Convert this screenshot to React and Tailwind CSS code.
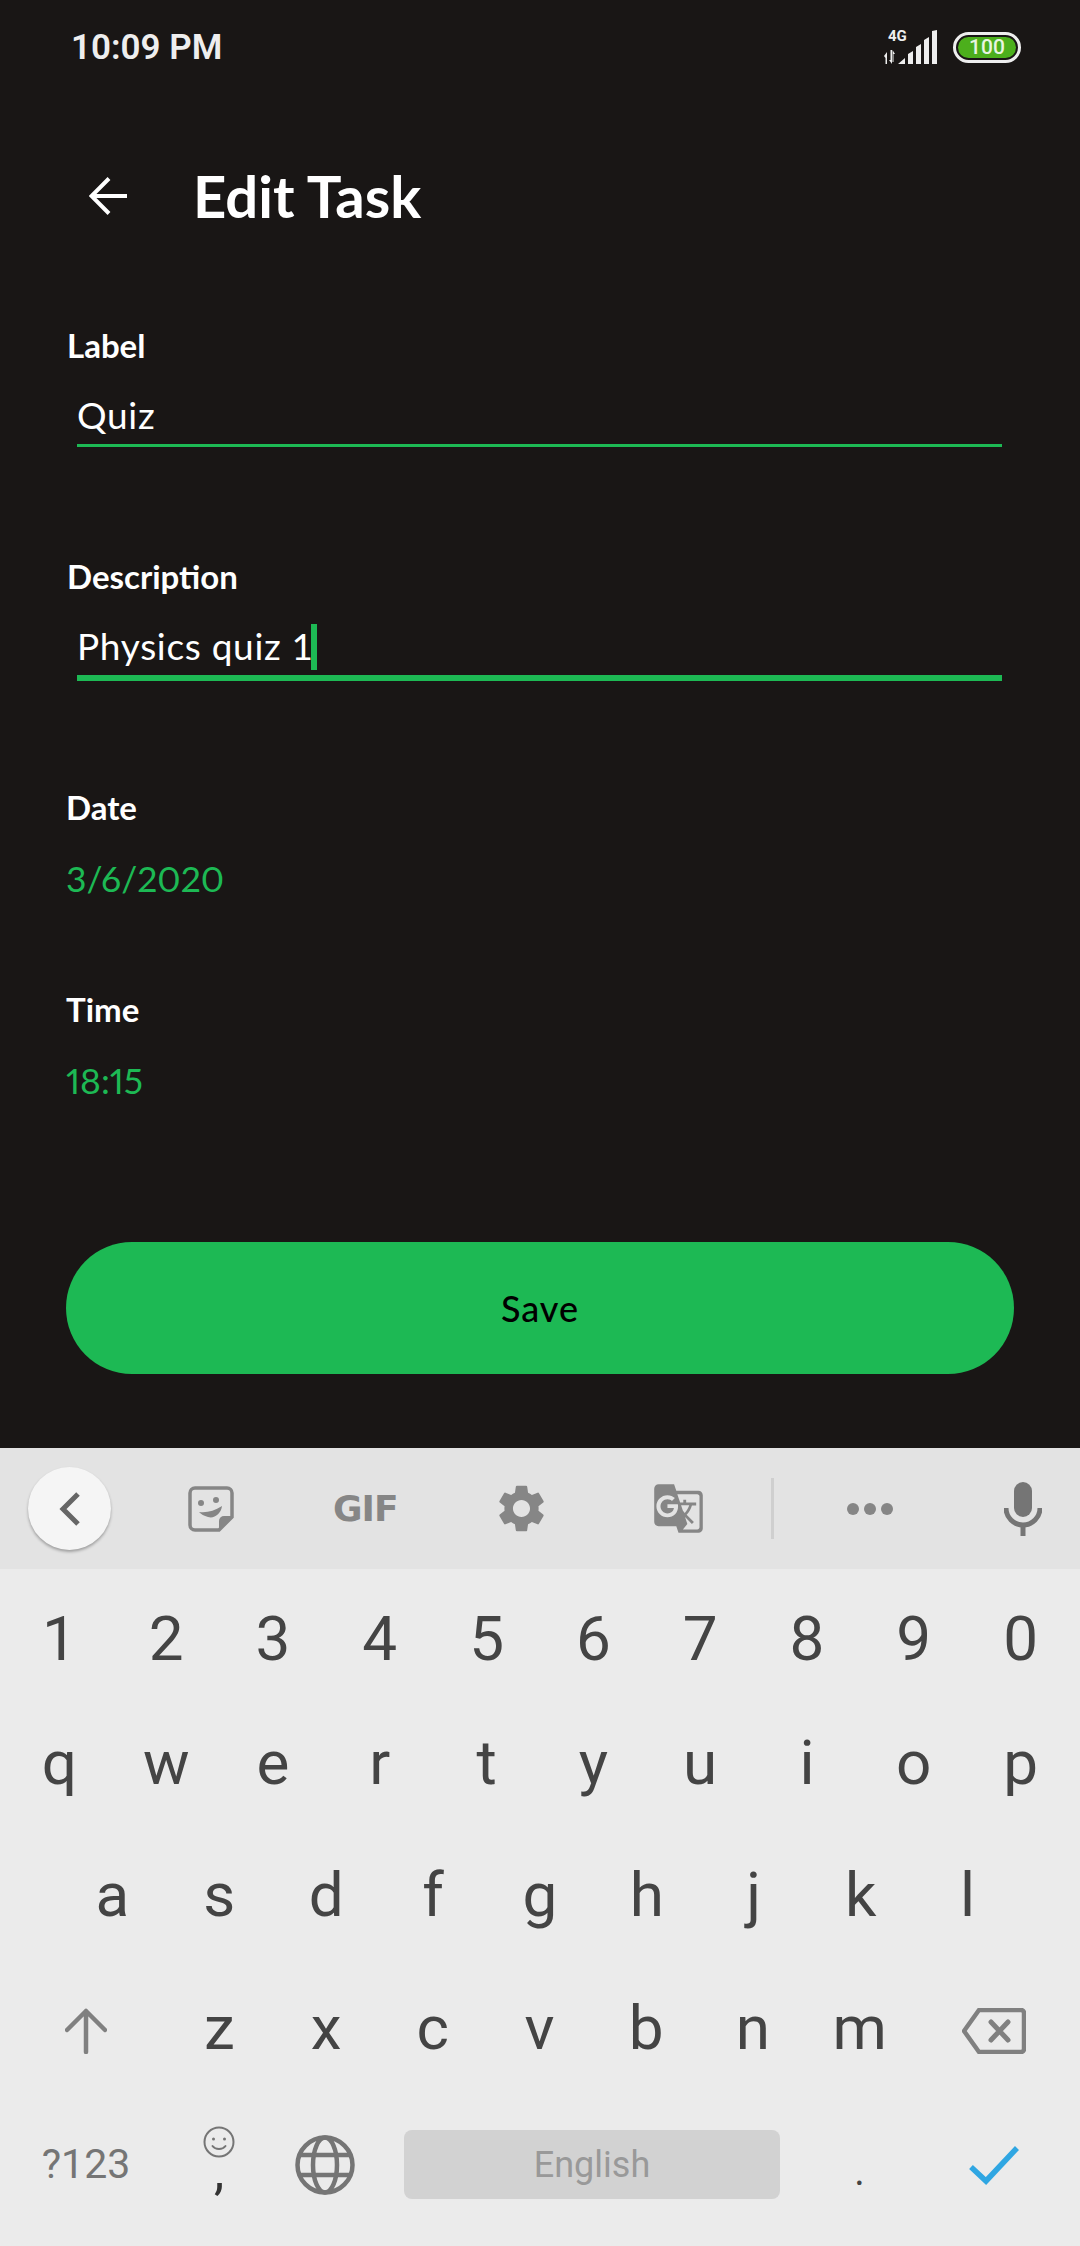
import React from 'react';
import { MdGTranslate } from 'react-icons/md';

const Field = ({ label, value, focused }) => (
  <div className="flex flex-col">
    <div className="pl-[67px] text-[33px] leading-[40px] font-bold text-white font-['Lato',sans-serif]">{label}</div>
    <div className="ml-[77px] mr-[78px] mt-[18px] flex items-end h-[61px] text-[37px] leading-[50px] tracking-[0.7px] text-white font-['Lato',sans-serif]">
      <span className="mb-[4px]">{value}</span>
      {focused && <span className="w-[6px] h-[46px] -ml-[3px] bg-[#1db954] mb-[5px]"></span>}
    </div>
    <div className={focused ? 'ml-[77px] mr-[78px] h-[6px] bg-[#1db954]' : 'ml-[77px] mr-[78px] h-[3px] bg-[#1db954]'}></div>
  </div>
);

const Picker = ({ label, value }) => (
  <div className="pl-[66px] flex flex-col font-['Lato',sans-serif]">
    <div className="text-[33px] leading-[40px] font-bold text-white">{label}</div>
    <div className="mt-[32px] text-[35.500px] leading-[40px] proportional-nums text-[#1db954]">{value}</div>
  </div>
);

const Keys = ({ letters, className }) => (
  <div className={className}>
    {letters.map((k) => (
      <div key={k} className="flex-1 text-center">{k}</div>
    ))}
  </div>
);

export default function App() {
  return (
    <div className="w-[1080px] h-[2246px] flex flex-col overflow-hidden bg-[#191615]">
      {/* status bar */}
      <div className="h-[94px] shrink-0 flex items-center justify-between pl-[71px] pr-[59px]">
        <span className="mt-[3px] text-[35px] font-semibold text-[#eeeeee] font-['Roboto',sans-serif]">10:09 PM</span>
        <div className="flex items-center gap-[14px]">
          <div className="relative w-[56px] h-[34px]">
            <span className="absolute left-[5px] top-[-3px] text-[15px] leading-[18px] font-bold text-[#eeeeee] font-['Roboto',sans-serif]">4G</span>
            <svg width="56" height="34" viewBox="0 0 56 34" fill="#eeeeee">
              <path d="M1 26l3-4v12h-1.500v-6zM9 34l-3-4h1.500v-10h1.500zM9.500 20l2.500 4h-1.500v8h-1z" />
              <path d="M15 34l7-6v6zM25 34v-10l5-3v13zM33 34v-17l5-3v20zM41 34v-24l5-3v27zM49 34v-33l5-1v34z" />
            </svg>
          </div>
          <div className="w-[68px] h-[31px] rounded-full border-[3px] border-[#eeeeee] p-[2px]">
            <div className="h-full rounded-full bg-[#4caf1c] flex items-center justify-center text-[#e8f5e0] text-[21px] leading-none font-medium font-['Roboto',sans-serif]">100</div>
          </div>
        </div>
      </div>

      {/* header */}
      <div className="h-[98px] shrink-0 mt-[53px] flex items-center pl-[89px]">
        <svg width="38" height="38" viewBox="0 0 38 38" fill="none" stroke="#ffffff" strokeWidth="4">
          <path d="M38 19H3M20 1.500 2.500 19 20 36.500" />
        </svg>
        <span className="ml-[66px] text-[58px] leading-[60px] font-bold text-white font-['Lato',sans-serif]">Edit Task</span>
      </div>

      <div className="mt-[80px]">
        <Field label="Label" value="Quiz" />
      </div>
      <div className="mt-[109px]">
        <Field label="Description" value="Physics quiz 1" focused />
      </div>

      <div className="mt-[106px]"><Picker label="Date" value="3/6/2020" /></div>
      <div className="mt-[90px]"><Picker label="Time" value="18:15" /></div>

      <div className="mx-[66px] mt-[141px] h-[132px] rounded-full bg-[#1db954] flex items-center justify-center text-[36px] tracking-[1px] text-black font-medium font-['Lato',sans-serif]">Save</div>

      <div className="flex-1"></div>

      {/* keyboard toolbar */}
      <div className="h-[121px] shrink-0 bg-[#e3e3e3] flex items-center relative">
        <div className="ml-[28px] w-[83px] h-[83px] rounded-full bg-[#f5f5f5] shadow-[0_2px_3px_rgba(0,0,0,0.3)] flex items-center justify-center">
          <svg width="22" height="34" viewBox="0 0 22 34" fill="none" stroke="#666666" strokeWidth="5">
            <path d="M19 2 4 17l15 15" />
          </svg>
        </div>
        <svg className="ml-[77px]" width="46" height="46" viewBox="0 0 46 46" fill="none">
          <path d="M7 2h32a5 5 0 0 1 5 5v24L31 44H7a5 5 0 0 1-5-5V7a5 5 0 0 1 5-5z" stroke="#868686" strokeWidth="3.500" />
          <path d="M44 30 31 44V35a5 5 0 0 1 5-5z" fill="#868686" />
          <circle cx="13" cy="17" r="3" fill="#868686" />
          <circle cx="28" cy="14" r="3" fill="#868686" />
          <path d="M11 26c8 1 15-1 23-6-1 8-8 13-14 11-4-1-7-3-9-5z" fill="#868686" />
        </svg>
        <span className="ml-[99px] w-[64px] text-[36px] leading-none font-bold text-[#868686] font-['DejaVu_Sans',sans-serif] tracking-[-1px]">GIF</span>
        <svg className="ml-[96px]" width="57" height="57" viewBox="0 0 24 24" fill="#868686">
          <path d="M19.14 12.94c.04-.3.06-.61.06-.94 0-.32-.02-.64-.07-.94l2.03-1.58a.49.49 0 0 0 .12-.61l-1.92-3.32a.488.488 0 0 0-.59-.22l-2.39.96c-.5-.38-1.03-.7-1.62-.94l-.36-2.54a.484.484 0 0 0-.48-.41h-3.84c-.24 0-.43.17-.47.41l-.36 2.54c-.59.24-1.13.57-1.62.94l-2.39-.96c-.22-.08-.47 0-.59.22L2.74 8.87c-.12.21-.08.47.12.61l2.03 1.58c-.05.3-.09.63-.09.94s.02.64.07.94l-2.03 1.58a.49.49 0 0 0-.12.61l1.92 3.32c.12.22.37.29.59.22l2.39-.96c.5.38 1.03.7 1.62.94l.36 2.54c.05.24.24.41.48.41h3.84c.24 0 .44-.17.47-.41l.36-2.54c.59-.24 1.13-.56 1.62-.94l2.39.96c.22.08.47 0 .59-.22l1.92-3.32c.12-.22.07-.47-.12-.61l-2.01-1.58zM12 15.6c-1.98 0-3.6-1.62-3.6-3.6s1.62-3.6 3.6-3.6 3.6 1.62 3.6 3.6-1.62 3.6-3.6 3.6z" />
        </svg>
        <MdGTranslate className="ml-[102px]" size={53} color="#868686" />
        <div className="ml-[66px] w-[3px] h-[61px] bg-[#cfcfcf]"></div>
        <div className="ml-[73px] flex gap-[5px]">
          <div className="w-[12px] h-[12px] rounded-full bg-[#868686]"></div>
          <div className="w-[12px] h-[12px] rounded-full bg-[#868686]"></div>
          <div className="w-[12px] h-[12px] rounded-full bg-[#868686]"></div>
        </div>
        <svg className="ml-[111px]" width="38" height="54" viewBox="0 0 38 54" fill="none">
          <rect x="10" y="0" width="18" height="35" rx="9" fill="#757575" />
          <path d="M2 26a17 17 0 0 0 34 0" stroke="#757575" strokeWidth="5" />
          <path d="M19 42v12" stroke="#757575" strokeWidth="5" />
        </svg>
      </div>

      {/* keyboard */}
      <div className="h-[677px] shrink-0 bg-[#ebebeb] pt-[9px] text-[#444444] text-[62px] font-['Roboto',sans-serif] flex flex-col">
        <Keys className="h-[120px] px-[6px] flex items-center" letters={['1', '2', '3', '4', '5', '6', '7', '8', '9', '0']} />
        <Keys className="h-[128px] px-[6px] flex items-center" letters={['q', 'w', 'e', 'r', 't', 'y', 'u', 'i', 'o', 'p']} />
        <Keys className="h-[137px] px-[59px] flex items-center" letters={['a', 's', 'd', 'f', 'g', 'h', 'j', 'k', 'l']} />
        <div className="h-[128px] px-[6px] flex items-center">
          <div className="w-[160px] mt-[8px] flex justify-center">
            <svg width="42" height="46" viewBox="0 0 42 46" fill="none" stroke="#808080" strokeWidth="4.500" strokeLinecap="round" strokeLinejoin="round">
              <path d="M21 44V3M2 22 21 3l19 19" />
            </svg>
          </div>
          <Keys className="flex-1 flex items-center" letters={['z', 'x', 'c', 'v', 'b', 'n', 'm']} />
          <div className="w-[161px] mt-[8px] flex justify-center">
            <svg width="64" height="46" viewBox="0 0 64 46" fill="none" stroke="#808080" strokeWidth="4.500" strokeLinejoin="round">
              <path d="M17 2h42a3 3 0 0 1 3 3v36a3 3 0 0 1-3 3H17L2 23z" />
              <path d="M29 14l17 18M46 14 29 32" strokeLinecap="round" strokeWidth="5" />
            </svg>
          </div>
        </div>
        <div className="h-[147px] px-[6px] flex items-center">
          <div className="w-[160px] text-center text-[41px] text-[#757575]">?123</div>
          <div className="w-[106px] flex flex-col items-center mt-[-20px]">
            <svg width="32" height="32" viewBox="0 0 32 32" fill="none" stroke="#757575" strokeWidth="2">
              <circle cx="16" cy="16" r="14.500" />
              <circle cx="10.500" cy="13" r="1.500" fill="#757575" stroke="none" />
              <circle cx="21.500" cy="13" r="1.500" fill="#757575" stroke="none" />
              <path d="M9.500 20c3 4 10 4 13 0" strokeLinecap="round" />
            </svg>
            <span className="text-[52px] leading-[24px] text-[#333333] mt-[2px]">,</span>
          </div>
          <div className="w-[106px] flex justify-center">
            <svg width="60" height="60" viewBox="0 0 60 60" fill="none" stroke="#757575" strokeWidth="4.500">
              <circle cx="30" cy="30" r="27.500" />
              <ellipse cx="30" cy="30" rx="12" ry="27.500" />
              <path d="M5 20h50M5 40h50" />
            </svg>
          </div>
          <div className="ml-[26px] w-[376px] h-[69px] rounded-[8px] bg-[#d2d2d2] flex items-center justify-center text-[36px] text-[#999999]">English</div>
          <div className="ml-[26px] w-[107px] text-center text-[40px] leading-[40px] pt-[14px] text-[#444444]">.</div>
          <div className="w-[161px] flex justify-center">
            <svg width="50" height="40" viewBox="0 0 50 40" fill="none" stroke="#2fa6e2" strokeWidth="5.500">
              <path d="M2 22l15 14L48 3" />
            </svg>
          </div>
        </div>
      </div>
    </div>
  );
}
